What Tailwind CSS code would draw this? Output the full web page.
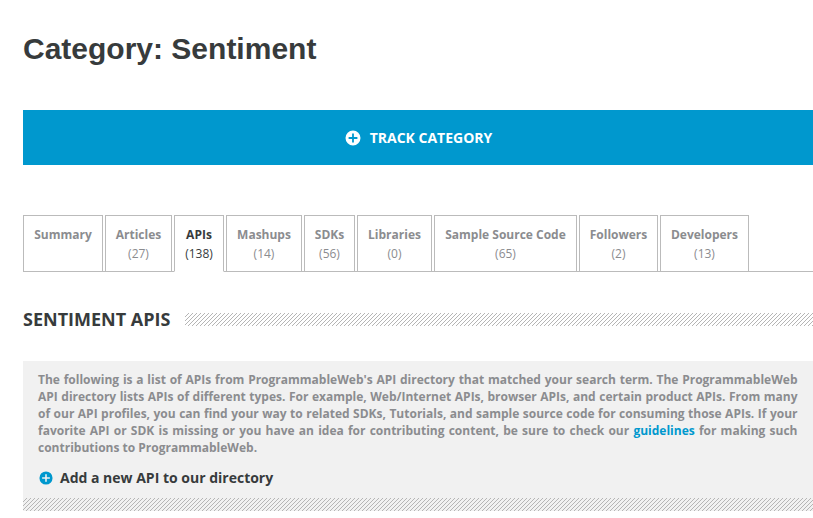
<!DOCTYPE html>
<html lang="en">
<head>
<meta charset="utf-8">
<title>Category: Sentiment</title>
<script src="https://cdn.jsdelivr.net/npm/@tailwindcss/browser@4"></script>
</head>
<body class="bg-white font-['Open_Sans','Noto_Sans',sans-serif] text-[#373b3c] overflow-hidden">
<svg class="hidden">
  <symbol id="plus" viewBox="0 0 16 16"><path fill="currentColor" fill-rule="evenodd" d="M8 .5a7.5 7.5 0 1 0 0 15a7.5 7.5 0 1 0 0-15zM7.1 3.6h1.8v3.5h3.5v1.8H8.900v3.500H7.100V8.900H3.600V7.100h3.500z"/></symbol>
</svg>
<main class="pl-[23px] pt-[30px]">
  <h1 class="h-[38px] leading-[38px] text-[30px] font-bold whitespace-nowrap font-['Liberation_Sans',Arial,sans-serif]">Category: Sentiment</h1>
  <a class="mt-[42px] h-[55px] pl-px bg-[#0098ce] text-white flex items-center justify-center">
    <svg class="size-4 mr-[9px]"><use href="#plus"/></svg>
    <span class="text-[14px] font-bold leading-5">TRACK CATEGORY</span>
  </a>
  <nav class="mt-[50px] flex gap-[2px] h-[57px] text-[12px] leading-[19px] text-center text-[#8b8c8f] whitespace-nowrap shadow-[inset_0_-1px_#bbb] *:border *:border-[#bbb] *:pt-[9px]">
    <a class="w-[80px]"><b>Summary</b></a>
    <a class="w-[67px]"><b>Articles</b><br>(27)</a>
    <a class="w-[50px] bg-white border-b-white! text-[#373b3c]"><b>APIs</b><br>(138)</a>
    <a class="w-[76px]"><b>Mashups</b><br>(14)</a>
    <a class="w-[51px]"><b>SDKs</b><br>(56)</a>
    <a class="w-[75px]"><b>Libraries</b><br>(0)</a>
    <a class="w-[143px]"><b>Sample Source Code</b><br>(65)</a>
    <a class="w-[79px]"><b>Followers</b><br>(2)</a>
    <a class="w-[89px]"><b>Developers</b><br>(13)</a>
  </nav>
  <div class="mt-[34px] h-[26px] flex items-start">
    <h2 class="w-[162px] shrink-0 text-[18px] leading-[26px] font-bold whitespace-nowrap">SENTIMENT APIS</h2>
    <svg class="grow h-[13px] mt-[7px]" shape-rendering="crispEdges">
      <defs><pattern id="hatch" width="4" height="4" patternUnits="userSpaceOnUse"><path fill="#b5b5b5" d="M3 0h1v1H3zM2 1h1v1H2zM1 2h1v1H1zM0 3h1v1H0z"/></pattern></defs>
      <rect width="100%" height="13" fill="url(#hatch)"/>
    </svg>
  </div>
  <section class="mt-[29px] bg-[#f1f1f1] h-[150px] flex flex-col">
    <p class="pt-[10px] pl-[15px] pr-[15.5px] text-[12px] leading-[17px] font-bold text-justify text-[#8b8c8f]">The following is a list of APIs from ProgrammableWeb's API directory that matched your search term. The ProgrammableWeb API directory lists APIs of different types. For example, Web/Internet APIs, browser APIs, and certain product APIs. From many of our API profiles, you can find your way to related SDKs, Tutorials, and sample source code for consuming those APIs. If your favorite API or SDK is missing or you have an idea for contributing content, be sure to check our <a class="text-[#0098ce]">guidelines</a> for making such contributions to ProgrammableWeb.</p>
    <a class="mt-[12px] pl-[16px] flex items-center h-5 text-[14px] font-bold leading-5">
      <svg class="size-[14px] mr-[7px] mb-px text-[#0098ce]"><use href="#plus"/></svg>Add a new API to our directory
    </a>
    <svg class="mt-auto w-full h-[13px]" shape-rendering="crispEdges"><rect width="100%" height="13" fill="url(#hatch)"/></svg>
  </section>
</main>
</body>
</html>
